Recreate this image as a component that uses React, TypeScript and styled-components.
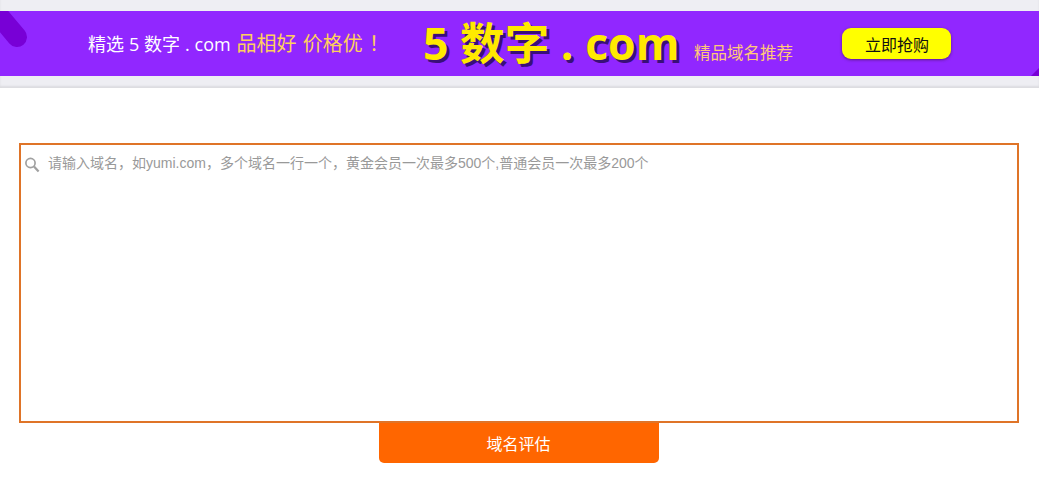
import styled, { createGlobalStyle } from 'styled-components';

const GlobalStyle = createGlobalStyle`
  html, body {
    margin: 0;
    padding: 0;
    background: #fff;
    font-family: "Liberation Sans", "Noto Sans CJK SC", sans-serif;
  }
`;

const AdStrip = styled.div`
  padding: 11px 0 12px;
  height: 65px;
  background: #eeeef3;
  box-shadow: inset 0 -2px 2px rgba(0, 0, 0, 0.08);
`;

const Banner = styled.a`
  position: relative;
  display: flex;
  align-items: flex-start;
  height: 65px;
  padding-left: 88px;
  overflow: hidden;
  background: #9127ff;
  font-family: "Open Sans", "Noto Sans CJK SC", sans-serif;
  white-space: nowrap;
`;

const Corner = styled.svg`
  position: absolute;
  left: 0;
  top: 0;
`;

const CornerBottom = styled.svg`
  position: absolute;
  right: 0;
  bottom: 0;
`;

const Slogan = styled.div`
  width: 335px;
  margin-top: 18px;
  line-height: 30px;
  font-size: 18px;
  word-spacing: 0.2px;
  color: #fff;
`;

const Gold = styled.span`
  margin-left: 1px;
  font-size: 20px;
  word-spacing: 1px;
  color: #ffd05c;
`;

const Brand = styled.div`
  width: 271px;
  line-height: 64px;
  font-size: 44.6px;
  font-weight: 700;
  color: #ffea00;
  text-shadow: 3px 3px 0 #3a0f78;
`;

const Tagline = styled.div`
  width: 148px;
  margin-top: 30px;
  line-height: 24px;
  font-size: 16.5px;
  color: #ffc878;
`;

const BuyButton = styled.button`
  width: 109px;
  height: 31px;
  margin-top: 17px;
  padding: 0 0 0 1px;
  border: 0;
  border-radius: 9px;
  background: #ffff00;
  box-shadow: 0 1px 3px rgba(60, 20, 60, 0.6);
  font-family: "Noto Sans CJK SC", sans-serif;
  font-size: 16px;
  color: #111;
`;

const Main = styled.main`
  display: flex;
  flex-direction: column;
  align-items: center;
  padding: 55px 20px 0 19px;
`;

const InputBox = styled.div`
  position: relative;
  width: 100%;
  height: 280px;
`;

const SearchIcon = styled.svg`
  position: absolute;
  left: 5px;
  top: 14px;
`;

const DomainInput = styled.textarea`
  display: block;
  box-sizing: border-box;
  width: 100%;
  height: 100%;
  padding: 9px 10px 10px 27px;
  border: 2px solid #df7428;
  outline: 0;
  resize: none;
  font-family: "Liberation Sans", "Noto Sans CJK SC", sans-serif;
  font-size: 14px;
  line-height: 18px;

  &::placeholder {
    color: #999;
    opacity: 1;
  }
`;

const SubmitButton = styled.button`
  width: 280px;
  height: 40px;
  padding: 0 1px 0 0;
  border: 0;
  border-radius: 0 0 5px 5px;
  background: #ff6600;
  font-family: "Noto Sans CJK SC", sans-serif;
  font-size: 16px;
  color: #fff;
`;

export default function App() {
  return (
    <>
      <GlobalStyle />
      <AdStrip>
        <Banner>
          <Corner width="30" height="50" viewBox="0 0 30 50">
            <path d="M-4 1 L17 26" stroke="#7800d6" strokeWidth="20" strokeLinecap="round" />
          </Corner>
          <CornerBottom width="8" height="8" viewBox="0 0 8 8">
            <path d="M8 0 L8 8 L0 8 Z" fill="#7800d6" />
          </CornerBottom>
          <Slogan>
            精选 5 数字 . com <Gold>品相好 价格优 ！</Gold>
          </Slogan>
          <Brand>5 数字 . com</Brand>
          <Tagline>精品域名推荐</Tagline>
          <BuyButton>立即抢购</BuyButton>
        </Banner>
      </AdStrip>
      <Main>
        <InputBox>
          <SearchIcon width="16" height="16" viewBox="0 0 16 16" fill="none" stroke="#a0a0a0" strokeWidth="1.7">
            <circle cx="6.5" cy="6" r="4.6" />
            <path d="M10 9.6 L14.6 14.6" strokeWidth="2.2" />
          </SearchIcon>
          <DomainInput placeholder="请输入域名，如yumi.com，多个域名一行一个，黄金会员一次最多500个,普通会员一次最多200个" />
        </InputBox>
        <SubmitButton>域名评估</SubmitButton>
      </Main>
    </>
  );
}
